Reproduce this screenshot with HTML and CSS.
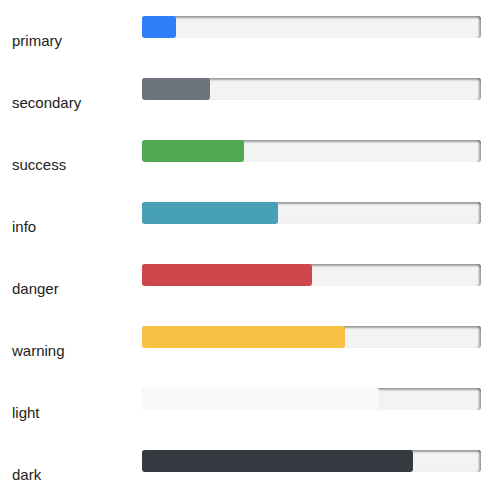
FILE: index.html
```html
<!DOCTYPE html>
<html>
<head>
<meta charset="utf-8">
<link rel="stylesheet" href="styles.css">
</head>
<body>
<div class="list">
  <div class="row"><span class="label">primary</span><div class="track"><div class="fill primary" style="width:10%"></div></div></div>
  <div class="row"><span class="label">secondary</span><div class="track"><div class="fill secondary" style="width:20%"></div></div></div>
  <div class="row"><span class="label">success</span><div class="track"><div class="fill success" style="width:30%"></div></div></div>
  <div class="row"><span class="label">info</span><div class="track"><div class="fill info" style="width:40%"></div></div></div>
  <div class="row"><span class="label">danger</span><div class="track"><div class="fill danger" style="width:50%"></div></div></div>
  <div class="row"><span class="label">warning</span><div class="track"><div class="fill warning" style="width:60%"></div></div></div>
  <div class="row"><span class="label">light</span><div class="track"><div class="fill light" style="width:70%"></div></div></div>
  <div class="row"><span class="label">dark</span><div class="track"><div class="fill dark" style="width:80%"></div></div></div>
</div>
</body>
</html>
```
FILE: styles.css
```css
html, body {
  margin: 0;
  padding: 0;
  background: #fff;
}
body {
  font-family: "Liberation Sans", Arial, sans-serif;
  font-size: 15px;
  color: #222;
}
.list {
  display: flex;
  flex-direction: column;
}
.row {
  display: flex;
  height: 62px;
}
.label {
  width: 130px;
  padding-left: 12px;
  padding-top: 32px;
  line-height: 18px;
}
.track {
  margin-top: 15.5px;
  width: 339px;
  height: 22px;
  background: #f3f3f3;
  border-radius: 3px;
  box-shadow: inset 0 3px 2px -1px rgba(0,0,0,0.35), inset -3px 0 2px -1px rgba(0,0,0,0.35);
  display: flex;
}
.fill {
  height: 100%;
  border-radius: 3px;
}
.primary { background: #2f7ef7; }
.secondary { background: #6c737c; }
.success { background: #50a852; }
.info { background: #48a0b4; }
.danger { background: #cf464c; }
.warning { background: #f7c244; }
.light { background: #f8f9fa; }
.dark { background: #353a40; }
```
